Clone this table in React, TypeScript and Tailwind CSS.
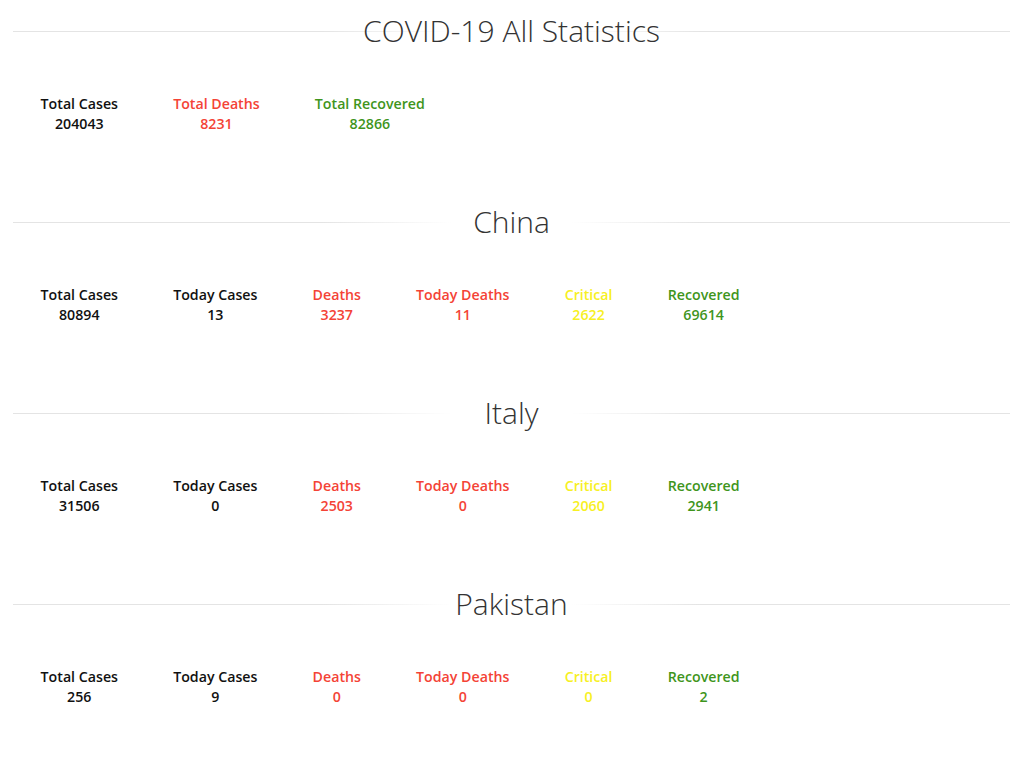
const RED = "text-[#f44336]";
const YELLOW = "text-[#f7f023]";
const GREEN = "text-[#3f951c]";
const BLACK = "text-[#111]";

type Stat = { label: string; value: number; color: string };

const sections: { title: string; stats: Stat[] }[] = [
  {
    title: "COVID-19 All Statistics",
    stats: [
      { label: "Total Cases", value: 204043, color: BLACK },
      { label: "Total Deaths", value: 8231, color: RED },
      { label: "Total Recovered", value: 82866, color: GREEN },
    ],
  },
  {
    title: "China",
    stats: [
      { label: "Total Cases", value: 80894, color: BLACK },
      { label: "Today Cases", value: 13, color: BLACK },
      { label: "Deaths", value: 3237, color: RED },
      { label: "Today Deaths", value: 11, color: RED },
      { label: "Critical", value: 2622, color: YELLOW },
      { label: "Recovered", value: 69614, color: GREEN },
    ],
  },
  {
    title: "Italy",
    stats: [
      { label: "Total Cases", value: 31506, color: BLACK },
      { label: "Today Cases", value: 0, color: BLACK },
      { label: "Deaths", value: 2503, color: RED },
      { label: "Today Deaths", value: 0, color: RED },
      { label: "Critical", value: 2060, color: YELLOW },
      { label: "Recovered", value: 2941, color: GREEN },
    ],
  },
  {
    title: "Pakistan",
    stats: [
      { label: "Total Cases", value: 256, color: BLACK },
      { label: "Today Cases", value: 9, color: BLACK },
      { label: "Deaths", value: 0, color: RED },
      { label: "Today Deaths", value: 0, color: RED },
      { label: "Critical", value: 0, color: YELLOW },
      { label: "Recovered", value: 2, color: GREEN },
    ],
  },
];

export default function App() {
  return (
    <div className="min-h-[764px] bg-white pl-[13px] pr-[14px] pt-[11px] font-['Open_Sans',sans-serif]">
      {sections.map((s) => (
        <section key={s.title} className="mb-[68px]">
          <h2 className="h-10 bg-[linear-gradient(to_right,#e4e4e4_31%,transparent_44%,transparent_56%,#e4e4e4_69%)] bg-[length:100%_1px] bg-center bg-no-repeat text-center text-[30px] font-light leading-10 text-[#333]">
            {s.title}
          </h2>
          <div className="mt-[43px] flex">
            {s.stats.map((st) => (
              <div
                key={st.label}
                className={`flex flex-col items-center px-[27.6px] text-[14.2px] font-semibold leading-5 ${st.color}`}
              >
                <span>{st.label}</span>
                <span>{st.value}</span>
              </div>
            ))}
          </div>
        </section>
      ))}
    </div>
  );
}
